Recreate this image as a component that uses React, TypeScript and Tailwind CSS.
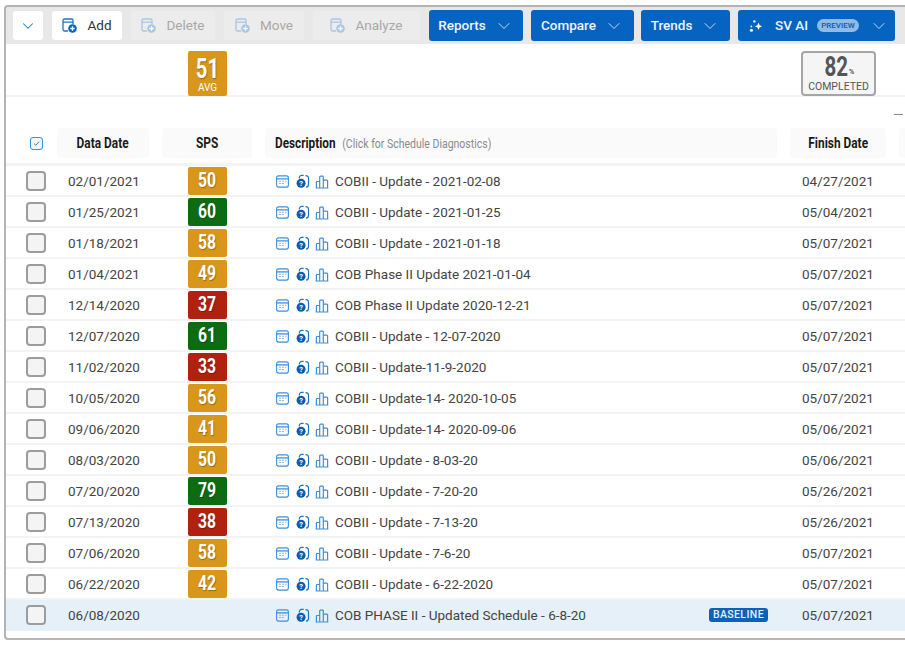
import { ChevronDown } from "lucide-react";

type Row = { date: string; sps?: number; tone?: "amber" | "green" | "red"; text: string; finish: string; baseline?: boolean };

const rows: Row[] = [
  { date: "02/01/2021", sps: 50, tone: "amber", text: "COBII - Update - 2021-02-08", finish: "04/27/2021" },
  { date: "01/25/2021", sps: 60, tone: "green", text: "COBII - Update - 2021-01-25", finish: "05/04/2021" },
  { date: "01/18/2021", sps: 58, tone: "amber", text: "COBII - Update - 2021-01-18", finish: "05/07/2021" },
  { date: "01/04/2021", sps: 49, tone: "amber", text: "COB Phase II Update 2021-01-04", finish: "05/07/2021" },
  { date: "12/14/2020", sps: 37, tone: "red", text: "COB Phase II Update 2020-12-21", finish: "05/07/2021" },
  { date: "12/07/2020", sps: 61, tone: "green", text: "COBII - Update - 12-07-2020", finish: "05/07/2021" },
  { date: "11/02/2020", sps: 33, tone: "red", text: "COBII - Update-11-9-2020", finish: "05/07/2021" },
  { date: "10/05/2020", sps: 56, tone: "amber", text: "COBII - Update-14- 2020-10-05", finish: "05/07/2021" },
  { date: "09/06/2020", sps: 41, tone: "amber", text: "COBII - Update-14- 2020-09-06", finish: "05/06/2021" },
  { date: "08/03/2020", sps: 50, tone: "amber", text: "COBII - Update - 8-03-20", finish: "05/06/2021" },
  { date: "07/20/2020", sps: 79, tone: "green", text: "COBII - Update - 7-20-20", finish: "05/26/2021" },
  { date: "07/13/2020", sps: 38, tone: "red", text: "COBII - Update - 7-13-20", finish: "05/26/2021" },
  { date: "07/06/2020", sps: 58, tone: "amber", text: "COBII - Update - 7-6-20", finish: "05/07/2021" },
  { date: "06/22/2020", sps: 42, tone: "amber", text: "COBII - Update - 6-22-2020", finish: "05/07/2021" },
  { date: "06/08/2020", text: "COB PHASE II - Updated Schedule - 6-8-20", finish: "05/07/2021", baseline: true },
];

function CalendarPlus({ muted }: { muted?: boolean }) {
  const stroke = muted ? "#a9c6e3" : "#1f74c4";
  const fill = muted ? "#a9c6e3" : "#0b62bd";
  return (
    <svg width="15" height="15" viewBox="0 0 15 15" fill="none" className="shrink-0">
      <path d="M6 13H2.5A1.5 1.5 0 0 1 1 11.5V2.5A1.5 1.5 0 0 1 2.5 1h7A1.5 1.5 0 0 1 11 2.5V6" stroke={stroke} strokeWidth="1.3" />
      <path d="M1 4.2H11" stroke={stroke} strokeWidth="1.3" />
      <circle cx="10.5" cy="10.5" r="4.3" fill={fill} />
      <path d="M10.5 8.3v4.4M8.3 10.5h4.4" stroke="white" strokeWidth="1.3" />
    </svg>
  );
}

function CalendarIcon() {
  return (
    <svg width="13" height="13" viewBox="0 0 13 13" fill="none" className="shrink-0">
      <rect x="0.6" y="0.9" width="11.8" height="11.2" rx="2" stroke="#3e8fd8" strokeWidth="1.1" />
      <path d="M0.8 3.9h11.4" stroke="#3e8fd8" strokeWidth="1.3" />
      <path d="M3 6.3h2.2M6 6.3h2M9 6.3h1.4M3 8.5h2.2M6 8.5h2" stroke="#8dbde8" strokeWidth="1.1" />
    </svg>
  );
}

function DiagnosticIcon() {
  return (
    <svg width="14" height="15" viewBox="0 0 15 15" fill="none" className="shrink-0">
      <path d="M3.6 4.4V3.4A2.4 2.4 0 0 1 6 1h2.2" stroke="#1c74c8" strokeWidth="1.3" />
      <path d="M10.2 1.4A2.6 2.6 0 0 1 13.4 4v6.4a3.2 3.2 0 0 1-2.6 3.2" stroke="#1c74c8" strokeWidth="1.3" />
      <circle cx="5.4" cy="9.4" r="4.8" fill="#0b5cad" />
      <text x="5.4" y="12.3" textAnchor="middle" fontSize="8" fontWeight="700" fill="white" fontFamily="Roboto, sans-serif">?</text>
    </svg>
  );
}

function BarsIcon() {
  return (
    <svg width="14" height="14" viewBox="0 0 14 14" fill="none" className="shrink-0">
      <path d="M0.6 13h12.8M1.4 13V7.2a.7.7 0 0 1 .7-.7h2.6M4.7 13V1.9a.7.7 0 0 1 .7-.7h2.2a.7.7 0 0 1 .7.7V13M8.3 5.2h3.6a.7.7 0 0 1 .7.7V13" stroke="#3e8fd8" strokeWidth="1.2" strokeLinejoin="round" />
    </svg>
  );
}

function Sparkle() {
  return (
    <svg width="14" height="14" viewBox="0 0 14 14" fill="white" className="shrink-0">
      <path d="M9.5 3.6l1.1 2.6 2.6 1.1-2.6 1.1-1.1 2.6-1.1-2.6-2.6-1.1 2.6-1.1z" />
      <circle cx="5.4" cy="2.4" r="1.2" />
      <circle cx="2.4" cy="7.4" r="0.9" />
      <circle cx="2.4" cy="11.2" r="1.5" />
    </svg>
  );
}

function GhostButton({ label, className }: { label: string; className: string }) {
  return (
    <button className={`flex h-[29px] items-center justify-center gap-[10px] rounded-[3px] bg-[#ececec] text-[13.5px] text-[#a8a8a8] ${className}`}>
      <CalendarPlus muted />
      {label}
    </button>
  );
}

function MenuButton({ label, className }: { label: string; className: string }) {
  return (
    <button className={`flex h-[31px] items-center justify-center gap-[8px] rounded-[3px] bg-[#0664c0] text-[13.5px] font-medium text-[#eef5fc] ${className}`}>
      {label}
      <ChevronDown size={20} strokeWidth={1.1} className="text-[#cfe2f5]" />
    </button>
  );
}

function HeaderCell({ children, className }: { children: React.ReactNode; className: string }) {
  return <div className={`flex h-[30px] shrink-0 items-center rounded-[3px] bg-[#fafafa] ${className}`}>{children}</div>;
}

function Narrow({ children, className }: { children: React.ReactNode; className: string }) {
  return <span className={`inline-block whitespace-nowrap ${className}`}>{children}</span>;
}

function ScoreBadge({ value, tone }: { value: number; tone: "amber" | "green" | "red" }) {
  const toneClass = tone === "green" ? "bg-[#0d6b12]" : tone === "red" ? "bg-[#b0210f]" : "bg-[#d8961a]";
  return (
    <div className={`flex h-[28px] w-[39px] items-center justify-center rounded-[2px] text-[21px] font-bold leading-none text-white ${toneClass}`}>
      <Narrow className="scale-x-[0.75] [text-shadow:1px_1px_1px_rgba(0,0,0,0.3)]">{value}</Narrow>
    </div>
  );
}

function TableRow({ row }: { row: Row }) {
  return (
    <div className={`flex h-[31px] items-center border-b-2 text-[13.5px] text-[#444] ${row.baseline ? "border-transparent bg-[#e5f0f9]" : "border-[#f3f3f3]"}`}>
      <div className="flex w-[51px] justify-center">
        <div className="ml-[9px] h-[20px] w-[20px] rounded-[4px] border-2 border-[#9c9c9c] bg-[#f4f4f4]" />
      </div>
      <div className="w-[92px] pl-[11px] pt-[1px]">{row.date}</div>
      <div className="ml-[13px] flex w-[90px] justify-start pl-[26px]">{row.sps !== undefined && row.tone && <ScoreBadge value={row.sps} tone={row.tone} />}</div>
      <div className="ml-[13px] flex w-[512px] items-center pl-[11px]">
        <span className="mt-[2px] flex"><CalendarIcon /></span>
        <span className="ml-[7px] mt-[2px] flex"><DiagnosticIcon /></span>
        <span className="ml-[5px] mt-[2px] flex"><BarsIcon /></span>
        <span className="ml-[6px] whitespace-nowrap pt-[1px]">{row.text}</span>
        {row.baseline && (
          <span className="ml-auto mr-[9px] mt-[1px] rounded-[3px] bg-[#0d62b8] px-[4px] text-[10.5px] font-medium leading-[14px] tracking-[0.4px] text-[#e6f0fa]">BASELINE</span>
        )}
      </div>
      <div className="ml-[13px] w-[96px] pl-[12px] pt-[1px]">{row.finish}</div>
    </div>
  );
}

export default function App() {
  return (
    <div className="h-[671px] w-[905px] overflow-hidden bg-white pl-[4px] pt-[5px] font-['Roboto',sans-serif]">
      <div className="h-[635px] w-[901px] overflow-hidden rounded-l-[4px] border-y-2 border-l-2 border-y-[#b4b4b4] border-l-[#b4b4b4]">
        <div className="flex h-[37px] items-center bg-[#e8e8e8] pl-[7px]">
          <button className="flex h-[29px] w-[30px] items-center justify-center rounded-[3px] bg-white text-[#1f74c4]">
            <ChevronDown size={18} strokeWidth={1.4} />
          </button>
          <button className="ml-[9px] flex h-[29px] w-[70px] items-center justify-center gap-[10px] rounded-[3px] bg-white text-[13.5px] text-[#333]">
            <CalendarPlus />
            Add
          </button>
          <GhostButton label="Delete" className="ml-[9px] w-[84px]" />
          <GhostButton label="Move" className="ml-[9px] w-[80px]" />
          <GhostButton label="Analyze" className="ml-[9px] w-[107px]" />
          <MenuButton label="Reports" className="ml-[9px] w-[94px]" />
          <MenuButton label="Compare" className="ml-[8px] w-[103px]" />
          <MenuButton label="Trends" className="ml-[7px] w-[89px]" />
          <button className="ml-[8px] flex h-[31px] w-[157px] items-center rounded-[3px] bg-[#0664c0] pl-[11px] text-[13.5px] font-medium text-[#eef5fc]">
            <Sparkle />
            <span className="ml-[12px]">SV AI</span>
            <span className="ml-[9px] w-[42px] rounded-full bg-[#8fbbe8] text-center text-[8px] font-medium leading-[13px] text-[#14589f]">PREVIEW</span>
            <ChevronDown size={20} strokeWidth={1.1} className="ml-[10px] text-[#cfe2f5]" />
          </button>
        </div>

        <div className="flex h-[53px] items-start justify-between border-b-2 border-[#f3f3f3] pt-[7px]">
          <div className="ml-[182px] flex h-[45px] w-[39px] flex-col items-center rounded-[2px] bg-[#d8961a] text-white">
            <Narrow className="mt-[6px] h-[24px] scale-x-[0.75] text-[27px] font-bold leading-[24px] [text-shadow:1px_1px_1px_rgba(0,0,0,0.3)]">51</Narrow>
            <span className="mt-[1px] text-[10px] leading-[12px]">AVG</span>
          </div>
          <div className="mr-[29px] flex h-[45px] w-[75px] flex-col items-center rounded-[4px] border-2 border-[#a5a5a5] bg-[#f5f5f5] text-[#555]">
            <div className="mr-[6px] mt-[2px] flex h-[24px] items-end leading-none">
              <Narrow className="origin-right scale-x-[0.76] text-[27px] font-bold leading-[24px]">82</Narrow>
              <span className="mb-[3px] ml-[1px] text-[7px] font-bold leading-none">%</span>
            </div>
            <span className="mt-[2px] text-[10.5px] leading-[12px]">COMPLETED</span>
          </div>
        </div>

        <div className="relative flex h-[69px] items-end border-b-[3px] border-[#f3f3f3] pb-[5px]">
          <div className="absolute right-[2px] top-[17px] h-px w-[9px] bg-[#888]" />
          <div className="flex h-[30px] w-[51px] shrink-0 items-center justify-center pl-[9px]">
            <span className="flex h-[13px] w-[13px] items-center justify-center rounded-[3px] border border-[#3e8fd8] bg-[#f0f7fd]">
              <svg width="9" height="9" viewBox="0 0 9 9" fill="none"><path d="M2 4.6l1.8 1.7 3.2-3.6" stroke="#2f7fc8" strokeWidth="1" /></svg>
            </span>
          </div>
          <HeaderCell className="w-[92px] justify-center text-[14px] font-bold text-[#1a1a1a]"><Narrow className="scale-x-[0.85]">Data Date</Narrow></HeaderCell>
          <HeaderCell className="ml-[13px] w-[90px] justify-center text-[14px] font-bold text-[#1a1a1a]"><Narrow className="scale-x-[0.85]">SPS</Narrow></HeaderCell>
          <HeaderCell className="ml-[13px] w-[512px] pl-[10px]">
            <span className="flex w-[290px] origin-left scale-x-[0.84] items-baseline whitespace-nowrap">
              <span className="text-[14px] font-bold text-[#1a1a1a]">Description</span>
              <span className="ml-[8px] text-[12.5px] text-[#8a8a8a]">(Click for Schedule Diagnostics)</span>
            </span>
          </HeaderCell>
          <HeaderCell className="ml-[13px] w-[96px] justify-center text-[14px] font-bold text-[#1a1a1a]"><Narrow className="scale-x-[0.85]">Finish Date</Narrow></HeaderCell>
          <HeaderCell className="ml-[13px] w-[12px]"><span /></HeaderCell>
        </div>

        {rows.map((row) => (
          <TableRow key={row.date} row={row} />
        ))}
      </div>
    </div>
  );
}
